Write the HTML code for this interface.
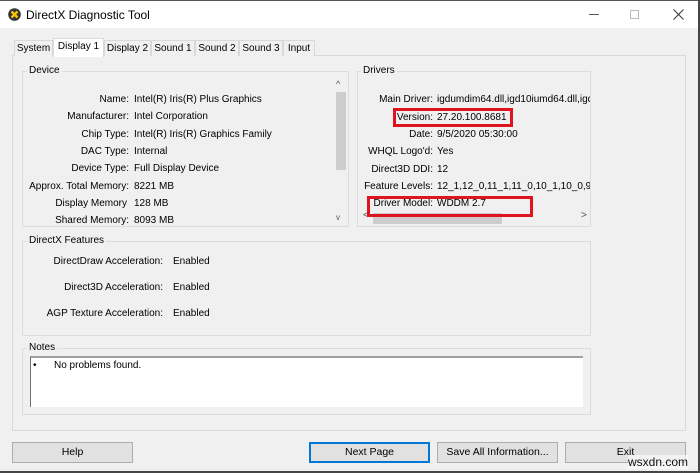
<!DOCTYPE html>
<html><head><style>
*{margin:0;padding:0;box-sizing:border-box}
body{width:700px;height:473px;background:#f0f0f0;font-family:"Liberation Sans",sans-serif;font-size:10px;color:#000;position:relative;overflow:hidden}
.a{position:absolute;white-space:nowrap}
.gb{position:absolute;border:1px solid #dcdcdc}
.gl{position:absolute;background:#f0f0f0;padding:0 2px;font-size:10px}
.r{position:absolute;text-align:right;white-space:nowrap}
.btn{position:absolute;height:21px;background:#e1e1e1;border:1px solid #adadad;text-align:center;line-height:19px;font-size:10.5px}
.tab{position:absolute;top:40px;height:16px;border:1px solid #d9d9d9;border-bottom:none;background:#f0f0f0;line-height:15px;text-align:center;font-size:10px}
.red{position:absolute;border:3px solid #e0141e}
</style></head><body>
<div class="a" style="left:0;top:0;width:700px;height:28px;background:#fff"></div>
<div class="a" style="left:0;top:0;width:700px;height:1px;background:#555"></div>
<div class="a" style="left:698px;top:0;width:2px;height:473px;background:#444"></div>
<div class="a" style="left:0;top:471px;width:700px;height:2px;background:#444"></div>
<svg class="a" style="left:8px;top:8px" width="13" height="13" viewBox="0 0 13 13"><circle cx="6.5" cy="6.5" r="6.3" fill="#333"/><path d="M3.5 3.5L9.5 9.5M9.5 3.5L3.5 9.5" stroke="#f5c400" stroke-width="2.4"/></svg>
<div class="a" style="left:26px;top:8px;font-size:12px">DirectX Diagnostic Tool</div>
<div class="a" style="left:589px;top:14px;width:10px;height:1px;background:#555"></div>
<div class="a" style="left:630px;top:10px;width:9px;height:9px;border:1px solid #bbb"></div>
<svg class="a" style="left:673px;top:9px" width="11" height="11"><path d="M0.5 0.5L10.5 10.5M10.5 0.5L0.5 10.5" stroke="#333" stroke-width="1"/></svg>

<div class="a" style="left:12px;top:55px;width:674px;height:376px;border:1px solid #d9d9d9;background:#f0f0f0"></div>
<div class="tab" style="left:14px;width:39px">System</div>
<div class="tab" style="left:53px;top:38px;height:19px;width:51px;background:#fff;border-color:#d9d9d9">Display 1</div>
<div class="tab" style="left:104px;width:47px">Display 2</div>
<div class="tab" style="left:151px;width:44px">Sound 1</div>
<div class="tab" style="left:195px;width:44px">Sound 2</div>
<div class="tab" style="left:239px;width:44px">Sound 3</div>
<div class="tab" style="left:283px;width:32px">Input</div>

<div class="gb" style="left:22px;top:71px;width:327px;height:156px"></div>
<div class="gl" style="left:27px;top:65px">Device</div>
<div class="a" style="left:333px;top:78px;width:15px;height:148px;background:#f0f0f0"></div>
<div class="a" style="left:336px;top:92px;width:10px;height:78px;background:#cdcdcd"></div>
<div class="a" style="left:336px;top:79px;font-size:9px;color:#555">^</div>
<div class="a" style="left:336px;top:213px;font-size:8px;color:#555">v</div>
<div class="r" style="right:571px;top:94px">Name:</div><div class="a" style="left:134px;top:94px">Intel(R) Iris(R) Plus Graphics</div>
<div class="r" style="right:571px;top:111px">Manufacturer:</div><div class="a" style="left:134px;top:111px">Intel Corporation</div>
<div class="r" style="right:571px;top:129px">Chip Type:</div><div class="a" style="left:134px;top:129px">Intel(R) Iris(R) Graphics Family</div>
<div class="r" style="right:571px;top:146px">DAC Type:</div><div class="a" style="left:134px;top:146px">Internal</div>
<div class="r" style="right:571px;top:163px">Device Type:</div><div class="a" style="left:134px;top:163px">Full Display Device</div>
<div class="r" style="right:571px;top:181px">Approx. Total Memory:</div><div class="a" style="left:134px;top:181px">8221 MB</div>
<div class="r" style="right:573px;top:198px">Display Memory</div><div class="a" style="left:134px;top:198px">128 MB</div>
<div class="r" style="right:571px;top:215px">Shared Memory:</div><div class="a" style="left:134px;top:215px">8093 MB</div>

<div class="gb" style="left:357px;top:71px;width:234px;height:156px"></div>
<div class="gl" style="left:361px;top:65px">Drivers</div>
<div class="r" style="right:267px;top:94px">Main Driver:</div><div class="a" style="left:437px;top:94px;width:153px;overflow:hidden">igdumdim64.dll,igd10iumd64.dll,igd10</div>
<div class="r" style="right:267px;top:112px">Version:</div><div class="a" style="left:437px;top:112px">27.20.100.8681</div>
<div class="r" style="right:267px;top:129px">Date:</div><div class="a" style="left:437px;top:129px">9/5/2020 05:30:00</div>
<div class="r" style="right:267px;top:146px">WHQL Logo'd:</div><div class="a" style="left:437px;top:146px">Yes</div>
<div class="r" style="right:267px;top:164px">Direct3D DDI:</div><div class="a" style="left:437px;top:164px">12</div>
<div class="r" style="right:267px;top:181px">Feature Levels:</div><div class="a" style="left:437px;top:181px;width:153px;overflow:hidden">12_1,12_0,11_1,11_0,10_1,10_0,9_3</div>
<div class="r" style="right:267px;top:198px">Driver Model:</div><div class="a" style="left:437px;top:198px">WDDM 2.7</div>
<div class="a" style="left:373px;top:213px;width:129px;height:11px;background:#cdcdcd"></div>
<div class="a" style="left:363px;top:210px;font-size:10px;color:#555">&lt;</div>
<div class="a" style="left:581px;top:210px;font-size:10px;color:#555">&gt;</div>
<div class="red" style="left:393px;top:108px;width:120px;height:19px"></div>
<div class="red" style="left:367px;top:196px;width:166px;height:21px"></div>

<div class="gb" style="left:22px;top:241px;width:569px;height:95px"></div>
<div class="gl" style="left:27px;top:235px">DirectX Features</div>
<div class="r" style="right:537px;top:256px">DirectDraw Acceleration:</div><div class="a" style="left:173px;top:256px">Enabled</div>
<div class="r" style="right:537px;top:282px">Direct3D Acceleration:</div><div class="a" style="left:173px;top:282px">Enabled</div>
<div class="r" style="right:537px;top:308px">AGP Texture Acceleration:</div><div class="a" style="left:173px;top:308px">Enabled</div>

<div class="gb" style="left:22px;top:348px;width:569px;height:67px"></div>
<div class="gl" style="left:27px;top:342px">Notes</div>
<div class="a" style="left:30px;top:356px;width:553px;height:51px;background:#fff;border-top:2px solid #a0a0a0;border-left:1px solid #707070"></div>
<div class="a" style="left:33px;top:360px">•</div>
<div class="a" style="left:54px;top:360px">No problems found.</div>

<div class="btn" style="left:12px;top:442px;width:121px">Help</div>
<div class="btn" style="left:309px;top:442px;width:121px;border:2px solid #0078d7;line-height:17px">Next Page</div>
<div class="btn" style="left:437px;top:442px;width:121px">Save All Information...</div>
<div class="btn" style="left:565px;top:442px;width:121px">Exit</div>
<div class="a" style="left:628px;top:455px;font-size:12px;color:#111;background:rgba(255,255,255,0.6)">wsxdn.com</div>
</body></html>
